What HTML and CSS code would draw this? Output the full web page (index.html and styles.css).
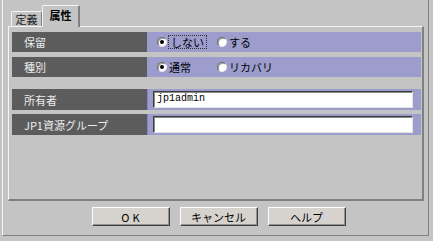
FILE: index.html
```html
<!DOCTYPE html>
<html lang="ja">
<head>
    <meta charset="UTF-8">
    <title>属性</title>
    <link rel="stylesheet" href="styles.css">
</head>
<body>
    <div class="window">
        <div class="tabs">
            <div class="tab">定義</div>
            <div class="tab tab-active">属性</div>
        </div>
        <div class="panel">
            <div class="group">
                <div class="row">
                    <div class="row-label">保留</div>
                    <div class="row-value">
                        <span class="option"><span class="radio radio-on"></span><span class="focus">しない</span></span>
                        <span class="option"><span class="radio"></span>する</span>
                    </div>
                </div>
                <div class="row">
                    <div class="row-label">種別</div>
                    <div class="row-value">
                        <span class="option"><span class="radio radio-on"></span>通常</span>
                        <span class="option"><span class="radio"></span>リカバリ</span>
                    </div>
                </div>
            </div>
            <div class="group group-fields">
                <div class="row row-input">
                    <div class="row-label">所有者</div>
                    <div class="row-value"><div class="field">jp1admin</div></div>
                </div>
                <div class="row row-input">
                    <div class="row-label">JP1資源グループ</div>
                    <div class="row-value"><div class="field"></div></div>
                </div>
            </div>
        </div>
        <div class="buttons">
            <button class="btn btn-ok">OK</button>
            <button class="btn">キャンセル</button>
            <button class="btn">ヘルプ</button>
        </div>
    </div>
</body>
</html>
```

FILE: styles.css
```css
body {
    margin: 0;
    background-color: #c4c4c4;
    font-family: "Noto Sans CJK JP", "DejaVu Sans", sans-serif;
    font-size: 11px;
    color: #000;
}
.window {
    box-sizing: border-box;
    width: 427px;
    height: 236px;
    margin-left: 2px;
    padding: 5px 4px 0 5px;
    border-left: 1px solid #f4f4f4;
    border-right: 1px solid #808080;
    border-bottom: 1px solid #808080;
}
.tabs {
    display: flex;
    align-items: flex-end;
    height: 21px;
    padding-left: 3px;
}
.tab {
    box-sizing: border-box;
    width: 31px;
    height: 15px;
    line-height: 14px;
    text-align: center;
    border-top: 1px solid #f4f4f4;
    border-left: 1px solid #f4f4f4;
    border-right: 1px solid #808080;
    border-radius: 2px 2px 0 0;
    color: #222;
}
.tab-active {
    width: 38px;
    height: 22px;
    line-height: 19px;
    margin-bottom: -1px;
    position: relative;
    background-color: #c4c4c4;
    border-right: 2px solid #808080;
    font-weight: bold;
    color: #000;
}
.panel {
    box-sizing: border-box;
    height: 175px;
    padding: 5px 1px 0 3px;
    border-top: 1px solid #f4f4f4;
    border-left: 1px solid #f4f4f4;
    border-right: 2px solid #808080;
    border-bottom: 2px solid #808080;
}
.group {
    display: flex;
    flex-direction: column;
    gap: 5px;
    margin-bottom: 12px;
}
.group-fields {
    gap: 4px;
}
.row {
    display: grid;
    grid-template-columns: 135px 1fr;
    height: 20px;
}
.row-input {
    height: 21px;
}
.row-label {
    display: flex;
    align-items: center;
    padding-left: 12px;
    background-color: #5c5c5c;
    color: #ececec;
}
.row-value {
    display: flex;
    align-items: center;
    padding-left: 10px;
    background-color: #9c9ccd;
}
.row-input .row-value {
    padding: 0 8px 0 5px;
    border-left: 1px solid #8484c4;
}
.option {
    display: flex;
    align-items: center;
    gap: 2px;
    width: 60px;
}
.radio {
    box-sizing: border-box;
    position: relative;
    width: 10px;
    height: 10px;
    border-radius: 50%;
    background-color: #fff;
    border: 1px solid;
    border-color: #6a6a6a #e8e8e8 #e8e8e8 #6a6a6a;
    box-shadow: inset 1px 1px 0 #a0a0a0;
}
.radio-on::after {
    content: "";
    position: absolute;
    left: 2px;
    top: 2px;
    width: 4px;
    height: 4px;
    border-radius: 50%;
    background-color: #000;
}
.focus {
    padding: 0 2px;
    outline: 1px dotted #333;
    line-height: 12px;
}
.field {
    box-sizing: border-box;
    width: 100%;
    height: 17px;
    padding-left: 3px;
    background-color: #fff;
    border: 1px solid;
    border-color: #3c3c3c #e4e4e4 #e4e4e4 #3c3c3c;
    box-shadow: inset 1px 1px 0 #8a8a8a;
    font-family: "Liberation Mono", monospace;
    font-size: 10px;
    line-height: 14px;
}
.buttons {
    display: flex;
    justify-content: center;
    gap: 10px;
    margin-top: 6px;
    padding-left: 5px;
}
.btn {
    box-sizing: border-box;
    width: 78px;
    height: 19px;
    padding: 0;
    background-color: #d6d3ce;
    border: 1px solid;
    border-color: #fff #404040 #404040 #fff;
    box-shadow: inset -1px -1px 0 #909090;
    font-family: "Noto Sans CJK JP", "DejaVu Sans", sans-serif;
    font-size: 11px;
    color: #000;
}
.btn-ok {
    padding-left: 3px;
    letter-spacing: 3px;
}
```
